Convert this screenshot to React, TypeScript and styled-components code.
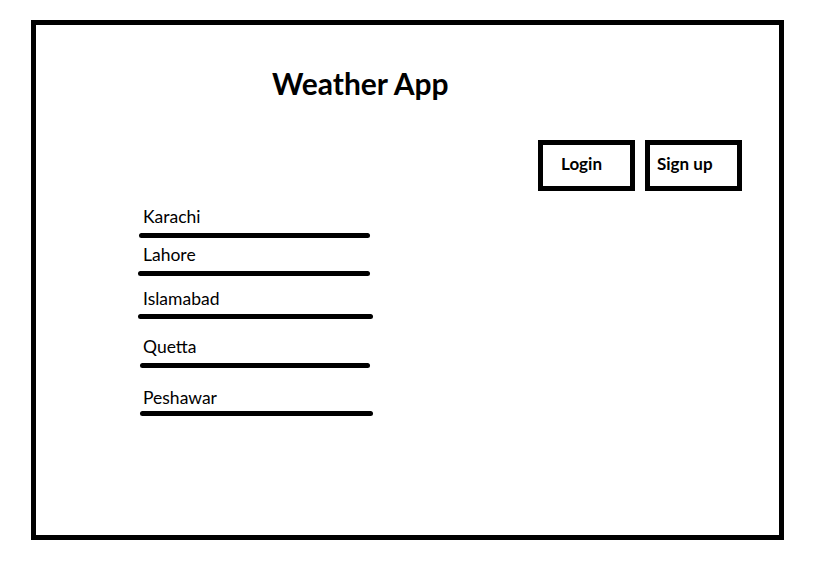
import React from "react";
import styled, { createGlobalStyle } from "styled-components";

const Global = createGlobalStyle`
  html, body { margin: 0; padding: 0; background: #fff; }
  body { font-family: Lato, "Open Sans", sans-serif; color: #000; }
`;

const Page = styled.div`
  padding: 20px 0 0 31px;
`;

const Frame = styled.div`
  box-sizing: border-box;
  width: 753px;
  height: 520px;
  border: 5px solid #000;
  display: flex;
  flex-direction: column;
`;

const Title = styled.h1`
  margin: 40px 0 0 236px;
  font-size: 30px;
  line-height: 36px;
  font-weight: 700;
`;

const ButtonRow = styled.div`
  display: flex;
  gap: 10px;
  margin: 39px 0 0 502px;
`;

const Button = styled.div<{ $pad: number }>`
  box-sizing: border-box;
  width: 97px;
  height: 51px;
  border: 5px solid #000;
  padding: 9px 0 0 ${(p) => p.$pad}px;
  font-size: 17px;
  font-weight: 700;
  line-height: 20px;
`;

const List = styled.div`
  display: flex;
  flex-direction: column;
  margin: 16px 0 0 103px;
`;

const Item = styled.div<{ $top: number }>`
  display: flex;
  flex-direction: column;
  align-items: flex-start;
  margin-top: ${(p) => p.$top}px;
`;

const Label = styled.span`
  font-size: 17.5px;
  line-height: 20px;
  padding-left: 4px;
`;

const Rule = styled.div<{ $gap: number; $shift: number; $w: number }>`
  margin: ${(p) => p.$gap}px 0 0 ${(p) => p.$shift}px;
  width: ${(p) => p.$w}px;
  height: 5px;
  border-radius: 2.5px;
  background: #000;
`;

const cities = [
  { name: "Karachi", top: 0, gap: 6, shift: 0, w: 231 },
  { name: "Lahore", top: 7, gap: 6, shift: -1, w: 232 },
  { name: "Islamabad", top: 13, gap: 5, shift: -1, w: 235 },
  { name: "Quetta", top: 18, gap: 6, shift: 1, w: 230 },
  { name: "Peshawar", top: 20, gap: 3, shift: 1, w: 233 },
];

export default function App() {
  return (
    <>
      <Global />
      <Page>
        <Frame>
          <Title>Weather App</Title>
          <ButtonRow>
            <Button $pad={18}>Login</Button>
            <Button $pad={7}>Sign up</Button>
          </ButtonRow>
          <List>
            {cities.map((c) => (
              <Item key={c.name} $top={c.top}>
                <Label>{c.name}</Label>
                <Rule $gap={c.gap} $shift={c.shift} $w={c.w} />
              </Item>
            ))}
          </List>
        </Frame>
      </Page>
    </>
  );
}
